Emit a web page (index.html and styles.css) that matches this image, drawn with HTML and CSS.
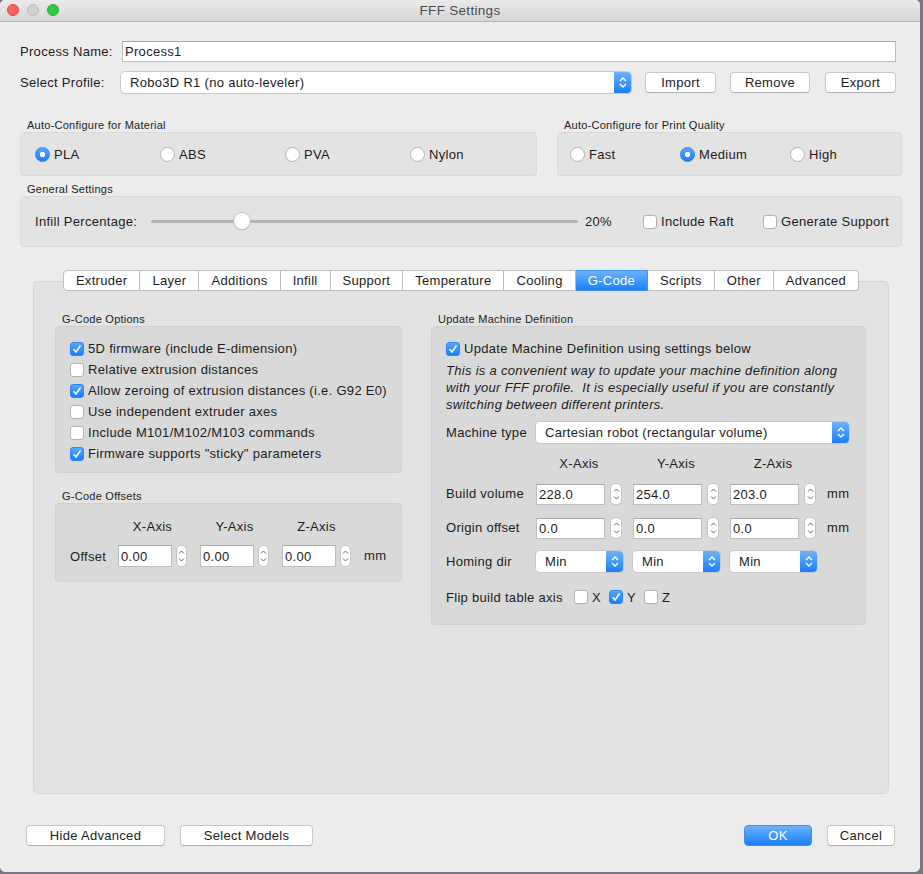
FILE: index.html
```html
<!DOCTYPE html>
<html lang="en">
<head>
  <meta charset="UTF-8">
  <title>FFF Settings</title>
  <link rel="stylesheet" href="styles.css">
</head>
<body>

<div class="window">
  <div class="titlebar">
    <div class="lights">
      <span class="light close"></span>
      <span class="light min"></span>
      <span class="light max"></span>
    </div>
    <div class="title">FFF Settings</div>
    <div></div>
  </div>

  <div class="content">
    <div class="form-row name-row">
      <span class="row-label">Process Name:</span>
      <input type="text" class="text-field name-field" value="Process1">
    </div>

    <div class="form-row profile-row">
      <span class="row-label">Select Profile:</span>
      <div class="popup profile-popup">
        <span class="popup-text">Robo3D R1 (no auto-leveler)</span>
        <span class="popup-arrows"><svg width="16" height="19" viewBox="0 0 16 19"><path d="M5 8 L8 5 L11 8 M5 11 L8 14 L11 11" fill="none" stroke="#fff" stroke-width="1.4"/></svg></span>
      </div>
      <button class="btn import-btn">Import</button>
      <button class="btn remove-btn">Remove</button>
      <button class="btn export-btn">Export</button>
    </div>

    <div class="auto-row">
      <div class="group material-group">
        <div class="group-title">Auto-Configure for Material</div>
        <div class="group-box radio-box">
          <div class="radio-item"><span class="radio on"></span>PLA</div>
          <div class="radio-item"><span class="radio"></span>ABS</div>
          <div class="radio-item"><span class="radio"></span>PVA</div>
          <div class="radio-item"><span class="radio"></span>Nylon</div>
        </div>
      </div>
      <div class="group quality-group">
        <div class="group-title">Auto-Configure for Print Quality</div>
        <div class="group-box radio-box">
          <div class="radio-item"><span class="radio"></span>Fast</div>
          <div class="radio-item"><span class="radio on"></span>Medium</div>
          <div class="radio-item"><span class="radio"></span>High</div>
        </div>
      </div>
    </div>

    <div class="group general-group">
      <div class="group-title">General Settings</div>
      <div class="group-box general-box">
        <span class="infill-label">Infill Percentage:</span>
        <div class="slider">
          <span class="slider-thumb" style="left: 83px"></span>
        </div>
        <span class="percent">20%</span>
        <div class="check-item raft-item"><span class="check"></span>Include Raft</div>
        <div class="check-item"><span class="check"></span>Generate Support</div>
      </div>
    </div>

    <div class="tabview">
      <div class="tabs">
        <span class="tab">Extruder</span>
        <span class="tab">Layer</span>
        <span class="tab">Additions</span>
        <span class="tab">Infill</span>
        <span class="tab">Support</span>
        <span class="tab">Temperature</span>
        <span class="tab">Cooling</span>
        <span class="tab active">G-Code</span>
        <span class="tab">Scripts</span>
        <span class="tab">Other</span>
        <span class="tab">Advanced</span>
      </div>

      <div class="tab-panel">
        <div class="left-col">
          <div class="group-title">G-Code Options</div>
          <div class="group-box inner-box options-box">
            <div class="check-item row"><span class="check on"><svg width="12" height="12" viewBox="0 0 12 12"><path d="M2.5 6.2 L5 9 L9.5 2.5" fill="none" stroke="#fff" stroke-width="1.5"/></svg></span>5D firmware (include E-dimension)</div>
            <div class="check-item row"><span class="check"></span>Relative extrusion distances</div>
            <div class="check-item row"><span class="check on"><svg width="12" height="12" viewBox="0 0 12 12"><path d="M2.5 6.2 L5 9 L9.5 2.5" fill="none" stroke="#fff" stroke-width="1.5"/></svg></span>Allow zeroing of extrusion distances (i.e. G92 E0)</div>
            <div class="check-item row"><span class="check"></span>Use independent extruder axes</div>
            <div class="check-item row"><span class="check"></span>Include M101/M102/M103 commands</div>
            <div class="check-item row"><span class="check on"><svg width="12" height="12" viewBox="0 0 12 12"><path d="M2.5 6.2 L5 9 L9.5 2.5" fill="none" stroke="#fff" stroke-width="1.5"/></svg></span>Firmware supports "sticky" parameters</div>
          </div>

          <div class="group-title offsets-title">G-Code Offsets</div>
          <div class="group-box inner-box offsets-box">
            <div class="offset-grid">
              <span></span>
              <span class="axis">X-Axis</span>
              <span class="axis">Y-Axis</span>
              <span class="axis">Z-Axis</span>
              <span></span>

              <span class="grid-label">Offset</span>
              <div class="spin"><input type="text" class="text-field" value="0.00"><span class="stepper"><svg width="11" height="20" viewBox="0 0 11 20"><path d="M3 7.5 L5.5 5 L8 7.5 M3 12.5 L5.5 15 L8 12.5" fill="none" stroke="#6a6a6a" stroke-width="1"/></svg></span></div>
              <div class="spin"><input type="text" class="text-field" value="0.00"><span class="stepper"><svg width="11" height="20" viewBox="0 0 11 20"><path d="M3 7.5 L5.5 5 L8 7.5 M3 12.5 L5.5 15 L8 12.5" fill="none" stroke="#6a6a6a" stroke-width="1"/></svg></span></div>
              <div class="spin"><input type="text" class="text-field" value="0.00"><span class="stepper"><svg width="11" height="20" viewBox="0 0 11 20"><path d="M3 7.5 L5.5 5 L8 7.5 M3 12.5 L5.5 15 L8 12.5" fill="none" stroke="#6a6a6a" stroke-width="1"/></svg></span></div>
              <span class="unit">mm</span>
            </div>
          </div>
        </div>

        <div class="right-col">
          <div class="group-title">Update Machine Definition</div>
          <div class="group-box inner-box machine-box">
            <div class="check-item row"><span class="check on"><svg width="12" height="12" viewBox="0 0 12 12"><path d="M2.5 6.2 L5 9 L9.5 2.5" fill="none" stroke="#fff" stroke-width="1.5"/></svg></span>Update Machine Definition using settings below</div>
            <p class="note">This is a convenient way to update your machine definition along<br>with your FFF profile.&nbsp; It is especially useful if you are constantly<br>switching between different printers.</p>

            <div class="machine-grid">
              <span class="grid-label">Machine type</span>
              <div class="popup type-popup">
                <span class="popup-text">Cartesian robot (rectangular volume)</span>
                <span class="popup-arrows"><svg width="16" height="19" viewBox="0 0 16 19"><path d="M5 8 L8 5 L11 8 M5 11 L8 14 L11 11" fill="none" stroke="#fff" stroke-width="1.4"/></svg></span>
              </div>

              <span class="header-gap"></span>
              <span class="axis header-gap">X-Axis</span>
              <span class="axis header-gap">Y-Axis</span>
              <span class="axis header-gap">Z-Axis</span>
              <span class="header-gap"></span>

              <span class="grid-label">Build volume</span>
              <div class="spin"><input type="text" class="text-field" value="228.0"><span class="stepper"><svg width="11" height="20" viewBox="0 0 11 20"><path d="M3 7.5 L5.5 5 L8 7.5 M3 12.5 L5.5 15 L8 12.5" fill="none" stroke="#6a6a6a" stroke-width="1"/></svg></span></div>
              <div class="spin"><input type="text" class="text-field" value="254.0"><span class="stepper"><svg width="11" height="20" viewBox="0 0 11 20"><path d="M3 7.5 L5.5 5 L8 7.5 M3 12.5 L5.5 15 L8 12.5" fill="none" stroke="#6a6a6a" stroke-width="1"/></svg></span></div>
              <div class="spin"><input type="text" class="text-field" value="203.0"><span class="stepper"><svg width="11" height="20" viewBox="0 0 11 20"><path d="M3 7.5 L5.5 5 L8 7.5 M3 12.5 L5.5 15 L8 12.5" fill="none" stroke="#6a6a6a" stroke-width="1"/></svg></span></div>
              <span class="unit">mm</span>

              <span class="grid-label">Origin offset</span>
              <div class="spin"><input type="text" class="text-field" value="0.0"><span class="stepper"><svg width="11" height="20" viewBox="0 0 11 20"><path d="M3 7.5 L5.5 5 L8 7.5 M3 12.5 L5.5 15 L8 12.5" fill="none" stroke="#6a6a6a" stroke-width="1"/></svg></span></div>
              <div class="spin"><input type="text" class="text-field" value="0.0"><span class="stepper"><svg width="11" height="20" viewBox="0 0 11 20"><path d="M3 7.5 L5.5 5 L8 7.5 M3 12.5 L5.5 15 L8 12.5" fill="none" stroke="#6a6a6a" stroke-width="1"/></svg></span></div>
              <div class="spin"><input type="text" class="text-field" value="0.0"><span class="stepper"><svg width="11" height="20" viewBox="0 0 11 20"><path d="M3 7.5 L5.5 5 L8 7.5 M3 12.5 L5.5 15 L8 12.5" fill="none" stroke="#6a6a6a" stroke-width="1"/></svg></span></div>
              <span class="unit">mm</span>

              <span class="grid-label">Homing dir</span>
              <div class="popup small-popup"><span class="popup-text">Min</span><span class="popup-arrows"><svg width="16" height="19" viewBox="0 0 16 19"><path d="M5 8 L8 5 L11 8 M5 11 L8 14 L11 11" fill="none" stroke="#fff" stroke-width="1.4"/></svg></span></div>
              <div class="popup small-popup"><span class="popup-text">Min</span><span class="popup-arrows"><svg width="16" height="19" viewBox="0 0 16 19"><path d="M5 8 L8 5 L11 8 M5 11 L8 14 L11 11" fill="none" stroke="#fff" stroke-width="1.4"/></svg></span></div>
              <div class="popup small-popup"><span class="popup-text">Min</span><span class="popup-arrows"><svg width="16" height="19" viewBox="0 0 16 19"><path d="M5 8 L8 5 L11 8 M5 11 L8 14 L11 11" fill="none" stroke="#fff" stroke-width="1.4"/></svg></span></div>
              <span></span>
            </div>

            <div class="flip-row">
              <span class="flip-label">Flip build table axis</span>
              <div class="check-item flip-item"><span class="check"></span>X</div>
              <div class="check-item flip-item"><span class="check on"><svg width="12" height="12" viewBox="0 0 12 12"><path d="M2.5 6.2 L5 9 L9.5 2.5" fill="none" stroke="#fff" stroke-width="1.5"/></svg></span>Y</div>
              <div class="check-item flip-item"><span class="check"></span>Z</div>
            </div>
          </div>
        </div>
      </div>
    </div>

    <div class="bottom-row">
      <button class="btn hide-btn">Hide Advanced</button>
      <button class="btn models-btn">Select Models</button>
      <span class="spacer"></span>
      <button class="btn ok-btn">OK</button>
      <button class="btn cancel-btn">Cancel</button>
    </div>
  </div>
</div>

</body>
</html>
```

FILE: styles.css
```css
* { box-sizing: border-box; }

body {
  margin: 0;
  background: #74787d;
  font-family: "Liberation Sans", Arial, sans-serif;
  font-size: 13px;
  letter-spacing: 0.3px;
  color: #1c1c1c;
}

.window {
  width: 920px;
  height: 872px;
  background: #ececec;
  border-radius: 5px;
  overflow: hidden;
}

/* title bar */
.titlebar {
  height: 22px;
  display: grid;
  grid-template-columns: 1fr auto 1fr;
  align-items: center;
  background: linear-gradient(#ebebeb, #d5d5d5);
  border-bottom: 1px solid #b4b4b4;
}
.lights { display: flex; gap: 8px; padding-left: 7px; margin-top: -2px; }
.light { width: 12px; height: 12px; border-radius: 50%; }
.light.close { background: #fc605c; border: 1px solid #de4b47; }
.light.min { background: #d0d0d0; border: 1px solid #bcbcbc; }
.light.max { background: #34c84a; border: 1px solid #28ad3c; }
.title { color: #4c4c4c; font-size: 13.5px; }

.content { padding: 0 18px 0 20px; }

/* top form */
.form-row { display: flex; align-items: center; height: 21px; }
.name-row { margin-top: 19px; }
.profile-row { margin-top: 10px; }
.row-label { flex: none; }
.name-row .row-label { width: 102px; }
.profile-row .row-label { width: 101px; }

.text-field {
  height: 21px;
  background: #fff;
  border: 1px solid #bdbdbd;
  border-top-color: #a9a9a9;
  font-family: inherit;
  font-size: 13px;
  letter-spacing: inherit;
  color: #1c1c1c;
  padding: 0 2px;
  outline: none;
  min-width: 0;
}
.name-field { flex: 1; margin-right: 6px; }

.popup {
  display: flex;
  justify-content: space-between;
  align-items: stretch;
  height: 21px;
  background: #fff;
  border-radius: 4px;
  box-shadow: 0 0 0 1px #c9c9c9, 0 1px 0 #b5b5b5;
}
.popup-text { padding-left: 9px; line-height: 21px; white-space: nowrap; }
.popup-arrows {
  width: 17px;
  display: flex;
  align-items: center;
  justify-content: center;
  background: linear-gradient(#6cb3fa, #1a7ffa);
  border-radius: 0 4px 4px 0;
}
.profile-popup { width: 510px; }

.btn {
  height: 21px;
  background: #fff;
  border: 1px solid #c8c8c8;
  border-bottom-color: #adadad;
  border-radius: 4px;
  font-family: inherit;
  font-size: 13px;
  letter-spacing: inherit;
  color: #1c1c1c;
  padding: 0;
}
.import-btn { width: 71px; margin-left: 14px; }
.remove-btn { width: 80px; margin-left: 14px; }
.export-btn { width: 71px; margin-left: 15px; }

/* groups */
.group-title { font-size: 11px; line-height: 13px; padding-left: 7px; color: #222; letter-spacing: 0.25px; }
.group-box {
  background: #e3e3e3;
  border: 1px solid #dadada;
  border-radius: 4px;
}

.auto-row { display: flex; gap: 20px; margin-top: 26px; }
.material-group .group-box { width: 517px; padding-left: 14px; }
.quality-group .group-box { width: 345px; padding-left: 12px; }
.radio-box { height: 44px; display: flex; align-items: center; }
.material-group .radio-item { width: 125px; }
.quality-group .radio-item { width: 110px; }
.radio-item { display: flex; align-items: center; gap: 4px; }
.radio {
  width: 15px;
  height: 15px;
  border-radius: 50%;
  background: #fff;
  border: 1px solid #b3b3b3;
  flex: none;
}
.radio.on {
  background: radial-gradient(circle, #fff 0 2.5px, transparent 3px), linear-gradient(#58a7fb, #1a7dfa);
  border-color: #2d86f3;
}

.general-group { margin-top: 7px; }
.general-box { height: 51px; display: flex; align-items: center; padding-left: 14px; }
.infill-label { width: 116px; flex: none; }
.slider {
  width: 427px;
  height: 3px;
  background: #b4b4b4;
  border-radius: 2px;
  position: relative;
  flex: none;
}
.slider-thumb {
  position: absolute;
  top: -7px;
  width: 16px;
  height: 16px;
  border-radius: 50%;
  background: #fff;
  box-shadow: 0 0 0 1px #c0c0c0, 0 1px 1px rgba(0,0,0,0.25);
}
.percent { width: 58px; margin-left: 7px; flex: none; }
.raft-item { width: 120px; flex: none; }

.check-item { display: flex; align-items: center; gap: 4px; white-space: nowrap; }
.check {
  width: 14px;
  height: 14px;
  border-radius: 3px;
  background: #fff;
  border: 1px solid #b3b3b3;
  flex: none;
  display: flex;
  align-items: center;
  justify-content: center;
}
.check.on { background: linear-gradient(#58a7fb, #1a7dfa); border-color: #2d86f3; }

/* tab view */
.tabview { margin: 23px 13px 0 13px; }
.tabs { display: flex; justify-content: center; position: relative; z-index: 1; height: 21px; }
.tab {
  background: #fff;
  border: 1px solid #bdbdbd;
  border-left: none;
  line-height: 19px;
  padding: 0 12px;
  white-space: nowrap;
}
.tab:first-child { border-left: 1px solid #bdbdbd; border-radius: 4px 0 0 4px; }
.tab:last-child { border-radius: 0 4px 4px 0; }
.tab.active {
  background: linear-gradient(#6bb2fa, #1b80fb);
  border-color: #3f93f5;
  color: #fff;
}

.tab-panel {
  margin-top: -10px;
  height: 513px;
  background: #e3e3e3;
  border: 1px solid #d6d6d6;
  border-radius: 5px;
  padding: 31px 22px 0 21px;
  display: flex;
  gap: 29px;
}
.left-col { width: 347px; }
.right-col { width: 435px; }

.inner-box { background: #d9d9d9; border-color: #d0d0d0; }
.options-box { padding: 11px 0 8px 14px; }
.row { height: 21px; }

.offsets-title { margin-top: 17px; }
.offsets-box { padding: 14px 0 14px 14px; }
.offset-grid {
  display: grid;
  grid-template-columns: 35px 69px 69px 69px auto;
  grid-template-rows: 16px 22px;
  column-gap: 13px;
  row-gap: 11px;
  align-items: center;
}
.axis { text-align: center; }
.grid-label { white-space: nowrap; }
.spin { display: flex; gap: 4px; align-items: center; }
.spin .text-field { flex: 1; height: 22px; }
.stepper {
  width: 11px;
  height: 22px;
  background: #fff;
  border: 1px solid #c4c4c4;
  border-radius: 5px;
  flex: none;
  display: flex;
  align-items: center;
  justify-content: center;
}
.stepper svg { flex: none; }

.machine-box { padding: 11px 0 20px 14px; height: 299px; }
.note { margin: 3px 0 0 0; font-style: italic; line-height: 17px; white-space: nowrap; }

.machine-grid {
  display: grid;
  grid-template-columns: 79px 86px 86px 86px auto;
  column-gap: 11px;
  margin-top: 9px;
  align-items: center;
}
.type-popup { grid-column: 2 / 6; width: 313px; }
.header-gap { margin-top: 13px; margin-bottom: 11px; height: 16px; line-height: 16px; }
.machine-grid .spin { margin-bottom: 12px; gap: 5px; }
.machine-grid .spin .text-field { height: 21px; }
.machine-grid .stepper { width: 12px; }
.unit { align-self: start; line-height: 21px; }
.small-popup { width: 87px; }
.machine-grid .grid-label { align-self: start; line-height: 21px; }
.machine-grid .type-popup, .machine-grid .grid-label:first-child { align-self: center; }

.flip-row { display: flex; align-items: center; margin-top: 17px; height: 16px; }
.flip-label { width: 128px; flex: none; }
.flip-item { width: 35px; flex: none; }

/* bottom buttons */
.bottom-row { display: flex; margin-top: 31px; padding: 0 7px 0 6px; }
.hide-btn { width: 139px; }
.models-btn { width: 133px; margin-left: 15px; }
.spacer { flex: 1; }
.ok-btn {
  width: 68px;
  background: linear-gradient(#6cb3fa, #1a7ffa);
  border-color: #3d8ff2;
  color: #fff;
}
.cancel-btn { width: 68px; margin-left: 15px; }
```
